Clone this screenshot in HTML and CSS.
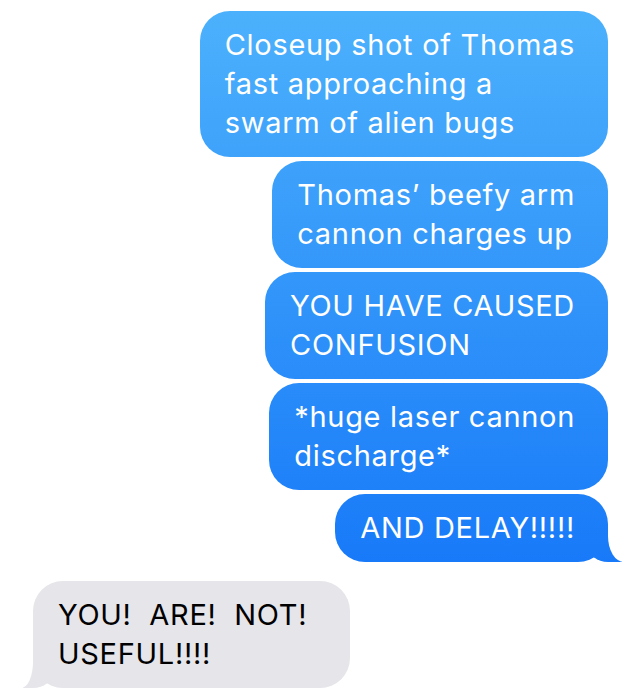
FILE: index.html
```html
<!DOCTYPE html>
<html>
<head>
<meta charset="utf-8">
<link rel="stylesheet" href="styles.css">
</head>
<body>
<div class="thread">
  <div class="msg me">Closeup shot of Thomas<br>fast approaching a<br>swarm of alien bugs</div>
  <div class="msg me">Thomas’ beefy arm<br>cannon charges up</div>
  <div class="msg me">YOU HAVE CAUSED<br>CONFUSION</div>
  <div class="msg me">*huge laser cannon<br>discharge*</div>
  <div class="msg me tail">AND DELAY!!!!!</div>
  <div class="msg them tail">YOU!&nbsp; ARE!&nbsp; NOT!<br>USEFUL!!!!</div>
</div>
</body>
</html>
```

FILE: styles.css
```css
html, body {
  margin: 0;
  padding: 0;
  background: #ffffff;
}

.thread {
  display: flex;
  flex-direction: column;
  align-items: flex-end;
  gap: 4px;
  padding: 11px 32px 0 33px;
  font-family: "Inter", "Liberation Sans", sans-serif;
  font-size: 29px;
  line-height: 39px;
  letter-spacing: 0.7px;
}

.msg {
  position: relative;
  padding: 14px 33px 15px 25px;
  border-radius: 30px;
  white-space: nowrap;
}

.me {
  color: #ffffff;
  background: linear-gradient(to bottom, #4db2fc 0px, #1779f8 570px) fixed;
}

.them {
  align-self: flex-start;
  margin-top: 15px;
  color: #000000;
  background: #e5e5ea;
  padding-right: 43px;
}

.me.tail::before {
  content: "";
  position: absolute;
  bottom: 0;
  right: -14px;
  width: 34px;
  height: 30px;
  background: linear-gradient(to bottom, #4db2fc 0px, #1779f8 570px) fixed;
  border-bottom-left-radius: 20px 16px;
}

.me.tail::after {
  content: "";
  position: absolute;
  bottom: 0;
  right: -40px;
  width: 40px;
  height: 30px;
  background: #ffffff;
  border-bottom-left-radius: 16px 26px;
}

.them.tail::before {
  content: "";
  position: absolute;
  bottom: 0;
  left: -10px;
  width: 30px;
  height: 30px;
  background: #e5e5ea;
  border-bottom-right-radius: 20px 16px;
}

.them.tail::after {
  content: "";
  position: absolute;
  bottom: 0;
  left: -40px;
  width: 40px;
  height: 30px;
  background: #ffffff;
  border-bottom-right-radius: 12px 26px;
}
```
